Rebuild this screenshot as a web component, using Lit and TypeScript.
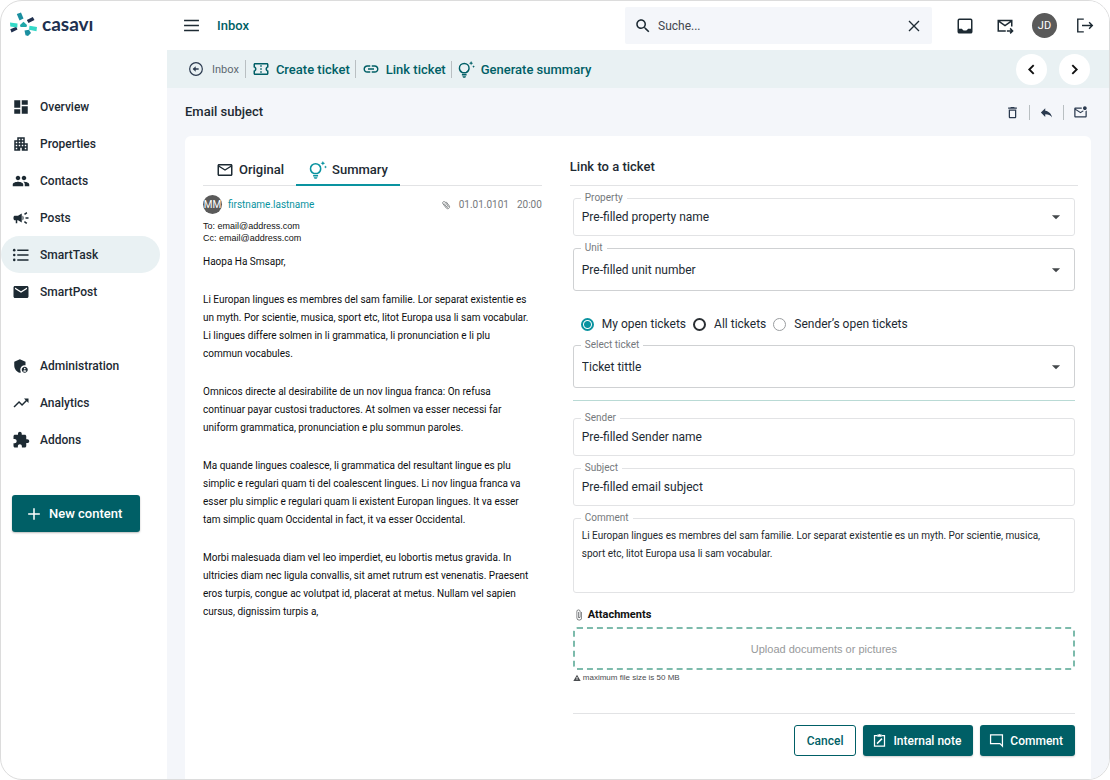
import { LitElement, html, css, svg, nothing } from "lit";
import type { SVGTemplateResult, TemplateResult } from "lit";
import { customElement, property, state } from "lit/decorators.js";
import { classMap } from "lit/directives/class-map.js";

const filled = (d: string) => svg`<path fill="currentColor" fill-rule="evenodd" d=${d}></path>`;
const stroked = (d: string, width = 2) =>
  svg`<path fill="none" stroke="currentColor" stroke-width=${width} d=${d}></path>`;

const ICONS: Record<string, SVGTemplateResult> = {
  menu: stroked("M1.500 5h21M1.500 12h21M1.500 19h21"),
  search: filled(
    "M15.5 14h-.79l-.28-.27C15.41 12.59 16 11.11 16 9.5 16 5.91 13.09 3 9.5 3S3 5.91 3 9.5 5.91 16 9.5 16c1.61 0 3.09-.59 4.23-1.57l.27.28v.79l5 4.99L20.49 19l-4.99-5zm-6 0C7.01 14 5 11.99 5 9.5S7.01 5 9.5 5 14 7.01 14 9.5 11.99 14 9.5 14z"
  ),
  close: stroked("M4.500 4.500l15 15M19.500 4.500l-15 15"),
  tray: svg`<rect x="3" y="3" width="18" height="18" rx="1.500" fill="none" stroke="currentColor" stroke-width="2"></rect>
    <path fill="currentColor" d="M3 15.500h5c.8 1.600 2.200 2.500 4 2.500s3.200-.9 4-2.500h5V21H3z"></path>`,
  forward: svg`${stroked("M13 18.500H3V4.500h18v8M3.500 5.500l8.500 6 8.500-6")}${stroked("M14.500 18.500h7M18.800 15.200l3.300 3.300-3.300 3.300")}`,
  logout: stroked("M11 3H2.500v18H11M8.500 12H23M18.500 7.500L23 12l-4.500 4.500"),
  dashboard: filled("M3 13h8V3H3v10zm0 8h8v-6H3v6zm10 0h8V11h-8v10zm0-18v6h8V3h-8z"),
  apartment: filled(
    "M17 11V3H7v4H3v14h8v-4h2v4h8V11h-4zM7 19H5v-2h2v2zm0-4H5v-2h2v2zm0-4H5V9h2v2zm4 4H9v-2h2v2zm0-4H9V9h2v2zm0-4H9V5h2v2zm4 8h-2v-2h2v2zm0-4h-2V9h2v2zm0-4h-2V5h2v2zm4 12h-2v-2h2v2zm0-4h-2v-2h2v2z"
  ),
  people: filled(
    "M16 11c1.66 0 2.99-1.34 2.99-3S17.66 5 16 5c-1.66 0-3 1.34-3 3s1.34 3 3 3zm-8 0c1.66 0 2.99-1.34 2.99-3S9.66 5 8 5C6.34 5 5 6.34 5 8s1.34 3 3 3zm0 2c-2.33 0-7 1.17-7 3.5V19h14v-2.5c0-2.33-4.67-3.5-7-3.5zm8 0c-.29 0-.62.02-.97.05 1.16.84 1.97 1.97 1.97 3.45V19h6v-2.5c0-2.33-4.67-3.5-7-3.5z"
  ),
  campaign: filled(
    "M18 11v2h4v-2h-4zm-2 6.61c.96.71 2.21 1.65 3.2 2.39.4-.53.8-1.07 1.2-1.6-.99-.74-2.24-1.68-3.2-2.4-.4.54-.8 1.08-1.2 1.61zM20.4 5.6c-.4-.53-.8-1.07-1.2-1.6-.99.74-2.24 1.68-3.2 2.4.4.53.8 1.07 1.2 1.6.96-.72 2.21-1.65 3.2-2.4zM4 9c-1.1 0-2 .9-2 2v2c0 1.1.9 2 2 2h1v4h2v-4h1l5 3V6L8 9H4zm11.5 3c0-1.33-.58-2.53-1.5-3.35v6.69c.92-.81 1.5-2.01 1.5-3.34z"
  ),
  list: svg`${stroked("M7 5.500h15M7 12h15M7 18.500h15")}
    <g fill="currentColor"><circle cx="3" cy="5.500" r="1.700"></circle><circle cx="3" cy="12" r="1.700"></circle><circle cx="3" cy="18.500" r="1.700"></circle></g>`,
  mail: filled(
    "M20 4H4c-1.1 0-1.99.9-1.99 2L2 18c0 1.1.9 2 2 2h16c1.1 0 2-.9 2-2V6c0-1.1-.9-2-2-2zm0 4l-8 5-8-5V6l8 5 8-5v2z"
  ),
  mailOutline: filled(
    "M22 6c0-1.1-.9-2-2-2H4c-1.1 0-2 .9-2 2v12c0 1.1.9 2 2 2h16c1.1 0 2-.9 2-2V6zm-2 0l-8 5-8-5h16zm0 12H4V8l8 5 8-5v10z"
  ),
  unread: filled(
    "M22 8.98V18c0 1.1-.9 2-2 2H4c-1.1 0-2-.9-2-2V6c0-1.1.9-2 2-2h10.1c-.06.32-.1.66-.1 1 0 .34.04.68.1 1H4l8 5 3.67-2.29c.47.43 1.02.76 1.63.98L12 13 4 8v10h16V9.9c.74-.15 1.42-.48 2-.92zM16 5c0 1.66 1.34 3 3 3s3-1.34 3-3-1.34-3-3-3-3 1.34-3 3z"
  ),
  admin: svg`${filled(
    "M17 11c.34 0 .67.04 1 .09V6.27L10.5 3 3 6.27v4.91c0 4.54 3.2 8.79 7.5 9.82.55-.13 1.08-.32 1.6-.55-.69-.98-1.1-2.17-1.1-3.45 0-3.31 2.69-6 6-6z"
  )}${filled(
    "M17 13c-2.21 0-4 1.79-4 4s1.79 4 4 4 4-1.79 4-4-1.79-4-4-4zm0 1.38c.62 0 1.12.51 1.12 1.12s-.51 1.12-1.12 1.12-1.12-.51-1.12-1.12.5-1.12 1.12-1.12zm0 5.37c-.93 0-1.74-.46-2.24-1.17.05-.72 1.51-1.08 2.24-1.08s2.19.36 2.24 1.08c-.5.71-1.31 1.17-2.24 1.17z"
  )}`,
  trend: filled("M16 6l2.29 2.29-4.88 4.88-4-4L2 16.59 3.41 18l6-6 4 4 6.3-6.29L22 12V6z"),
  puzzle: filled(
    "M20.5 11H19V7c0-1.1-.9-2-2-2h-4V3.5C13 2.12 11.88 1 10.5 1S8 2.12 8 3.5V5H4c-1.1 0-1.99.9-1.99 2v3.8H3.5c1.49 0 2.7 1.21 2.7 2.7s-1.21 2.7-2.7 2.7H2V20c0 1.1.9 2 2 2h3.8v-1.5c0-1.49 1.21-2.7 2.7-2.7 1.49 0 2.7 1.21 2.7 2.7V22H17c1.1 0 2-.9 2-2v-4h1.5c1.38 0 2.5-1.12 2.5-2.5S21.88 11 20.5 11z"
  ),
  plus: stroked("M12 2v20M2 12h20", 2.6),
  back: svg`<circle cx="12" cy="12" r="9.500" fill="none" stroke="currentColor" stroke-width="1.800"></circle>${stroked("M8.500 12H16")}${filled("M7 12l4.500-4v8z")}`,
  ticket: filled(
    "M22 10V6c0-1.110-.9-2-2-2H4c-1.100 0-1.990.890-1.990 2v4c1.100 0 1.990.9 1.990 2s-.89 2-2 2v4c0 1.100.9 2 2 2h16c1.100 0 2-.9 2-2v-4c-1.100 0-2-.9-2-2s.9-2 2-2zm-2-1.460c-1.190.690-2 1.990-2 3.460s.810 2.770 2 3.460V18H4v-2.540c1.190-.690 2-1.990 2-3.460 0-1.480-.8-2.770-1.990-3.460L4 6h16v2.540zM11 15h2v2h-2zm0-4h2v2h-2zm0-4h2v2h-2z"
  ),
  link: filled(
    "M3.9 12c0-1.71 1.39-3.1 3.1-3.1h4V7H7c-2.76 0-5 2.24-5 5s2.24 5 5 5h4v-1.9H7c-1.71 0-3.1-1.39-3.1-3.1zM8 13h8v-2H8v2zm9-6h-4v1.9h4c1.71 0 3.1 1.39 3.1 3.1s-1.39 3.1-3.1 3.1h-4V17h4c2.76 0 5-2.24 5-5s-2.24-5-5-5z"
  ),
  bulb: svg`${stroked("M6.200 16.500C3.600 15.200 2 12.900 2 10.200 2 6.500 5 3.500 8.800 3.500s6.800 3 6.800 6.700c0 2.700-1.600 5-4.200 6.300z")}
    ${stroked("M5.500 19.500h6.600")}${filled("M6.300 21.500h5c-.2 1.300-1.200 2.200-2.500 2.200s-2.300-.9-2.500-2.200z")}
    ${filled("M18.500 0l.9 2.100 2.100.9-2.100.9-.9 2.100-.9-2.100-2.100-.9 2.100-.9zM22 6l.6 1.400 1.400.6-1.400.6L22 10l-.6-1.400L20 8l1.400-.6z")}`,
  left: stroked("M15.500 5l-7 7 7 7", 3),
  right: stroked("M8.500 5l7 7-7 7", 3),
  trash: filled("M6 19c0 1.1.9 2 2 2h8c1.1 0 2-.9 2-2V7H6v12zM8 9h8v10H8V9zm7.5-5l-1-1h-5l-1 1H5v2h14V4z"),
  reply: filled("M10 9V5l-7 7 7 7v-4.1c5 0 8.5 1.6 11 5.1-1-5-4-10-11-11z"),
  clip: filled(
    "M16.5 6v11.5c0 2.21-1.79 4-4 4s-4-1.79-4-4V5c0-1.38 1.12-2.5 2.5-2.5s2.5 1.12 2.5 2.5v10.5c0 .55-.45 1-1 1s-1-.45-1-1V6H10v9.5c0 1.38 1.12 2.5 2.5 2.5s2.5-1.12 2.5-2.5V5c0-2.21-1.79-4-4-4S7 2.79 7 5v12.5c0 3.04 2.46 5.5 5.5 5.5s5.5-2.46 5.5-5.5V6h-1.5z"
  ),
  clipTilted: svg`<g transform="rotate(-38 12 12)">${stroked("M17 6v12c0 2.500-2 4.500-4.500 4.500S8 20.500 8 18V5c0-1.800 1.400-3.200 3.200-3.200S14.500 3.200 14.500 5v12c0 1-.8 2-2 2s-2-1-2-2V6", 1.9)}</g>`,
  warning: filled("M1 21h22L12 2 1 21zm12.500-3h-3v-2h3v2zm0-4h-3v-5h3v5z"),
  caret: filled("M5 9l7 7 7-7z"),
  note: svg`${stroked("M8.500 4H4v17h16V4h-4.500")}${filled("M8.500 2.500h2a1.600 1.600 0 0 1 3 0h2V6h-7z")}${stroked("M8 17l8-8", 2.4)}`,
  bubble: stroked("M21.500 21l-4-4H2.500V3h19z"),
};

@customElement("ui-icon")
export class UiIcon extends LitElement {
  @property() name = "";
  @property({ type: Number }) size = 18;

  static styles = css`
    :host {
      display: inline-flex;
      flex: none;
    }
    svg {
      display: block;
      overflow: visible;
    }
  `;

  render() {
    return html`<svg width=${this.size} height=${this.size} viewBox="0 0 24 24" aria-hidden="true">
      ${ICONS[this.name] ?? nothing}
    </svg>`;
  }
}

const NAV = [
  [
    ["Overview", "dashboard"],
    ["Properties", "apartment"],
    ["Contacts", "people"],
    ["Posts", "campaign"],
    ["SmartTask", "list"],
    ["SmartPost", "mail"],
  ],
  [
    ["Administration", "admin"],
    ["Analytics", "trend"],
    ["Addons", "puzzle"],
  ],
];

// Plain-text mail: the line breaks belong to the message.
const MESSAGE = [
  ["Haopa Ha Smsapr,"],
  [
    "Li Europan lingues es membres del sam familie. Lor separat existentie es",
    "un myth. Por scientie, musica, sport etc, litot Europa usa li sam vocabular.",
    "Li lingues differe solmen in li grammatica, li pronunciation e li plu",
    "commun vocabules.",
  ],
  [
    "Omnicos directe al desirabilite de un nov lingua franca: On refusa",
    "continuar payar custosi traductores. At solmen va esser necessi far",
    "uniform grammatica, pronunciation e plu sommun paroles.",
  ],
  [
    "Ma quande lingues coalesce, li grammatica del resultant lingue es plu",
    "simplic e regulari quam ti del coalescent lingues. Li nov lingua franca va",
    "esser plu simplic e regulari quam li existent Europan lingues. It va esser",
    "tam simplic quam Occidental in fact, it va esser Occidental.",
  ],
  [
    "Morbi malesuada diam vel leo imperdiet, eu lobortis metus gravida. In",
    "ultricies diam nec ligula convallis, sit amet rutrum est venenatis. Praesent",
    "eros turpis, congue ac volutpat id, placerat at metus. Nullam vel sapien",
    "cursus, dignissim turpis a,",
  ],
];

@customElement("app-root")
export class AppRoot extends LitElement {
  @state() private section = "SmartTask";
  @state() private scope = "My open tickets";

  static styles = css`
    :host {
      display: block;
      font-family: Roboto, "Liberation Sans", sans-serif;
      font-size: 12px;
      line-height: 18px;
      color: #1d2a33;
      --teal: #005f66;
      --accent: #0a93a0;
      --mist: #e9f1f3;
      --line: #e2e3e5;
    }
    * {
      box-sizing: border-box;
    }
    button,
    input,
    select,
    textarea {
      font: inherit;
      color: inherit;
      margin: 0;
    }
    button {
      border: 0;
      padding: 0;
      background: none;
      cursor: pointer;
    }
    a {
      color: inherit;
      text-decoration: none;
    }
    h1,
    h2,
    p {
      margin: 0;
    }
    .frame {
      display: grid;
      grid-template-columns: 166px minmax(0, 1fr);
      min-height: 100vh;
      border: 1px solid #dcdcdc;
      border-radius: 22px;
      overflow: hidden;
      background: #fff;
    }
    .sidebar {
      display: flex;
      flex-direction: column;
    }
    .brand {
      display: flex;
      align-items: center;
      gap: 5px;
      height: 46px;
      padding-left: 8px;
    }
    .wordmark {
      font-family: Lato, sans-serif;
      font-size: 19px;
      font-weight: 700;
      color: #20304f;
    }
    .menu {
      padding-top: 4px;
    }
    .group {
      display: flex;
      flex-direction: column;
      margin-top: 37px;
    }
    .item {
      display: flex;
      align-items: center;
      gap: 10px;
      height: 37px;
      margin-right: 7px;
      padding-left: 11px;
      border-radius: 19px;
      font-weight: 500;
    }
    .item.current {
      background: var(--mist);
    }
    .new {
      display: flex;
      align-items: center;
      gap: 8px;
      width: 128px;
      height: 37px;
      margin: 37px 0 0 11px;
      padding-left: 15px;
      border-radius: 3px;
      background: var(--teal);
      color: #fff;
      font-size: 13px;
      font-weight: 500;
      box-shadow: 0 1px 2px #0004;
    }
    .main {
      display: flex;
      flex-direction: column;
      background: #f4f6fa;
    }
    .icon {
      display: grid;
      place-items: center;
    }
    .topbar {
      display: flex;
      align-items: center;
      height: 49px;
      padding: 0 12px 0 16px;
      background: #fff;
    }
    .title {
      margin-left: 17px;
      font-size: 13px;
      font-weight: 500;
      color: var(--teal);
    }
    .search {
      display: flex;
      align-items: center;
      gap: 6px;
      width: 307px;
      height: 37px;
      margin-left: auto;
      padding: 0 10px 0 9px;
      border-radius: 2px;
      background: #f4f6fa;
    }
    .search input {
      flex: 1;
      min-width: 0;
      padding: 0;
      border: 0;
      background: none;
      outline: none;
    }
    .search input::placeholder {
      color: #43474e;
      opacity: 1;
    }
    .account {
      display: grid;
      grid-template-columns: repeat(4, 25px);
      align-items: center;
      gap: 15px;
      margin-left: 20px;
    }
    .avatar {
      display: grid;
      place-items: center;
      width: 25px;
      height: 25px;
      border-radius: 50%;
      background: #5a5a5a;
      color: #fff;
      font-size: 11px;
    }
    .avatar.small {
      width: 19px;
      height: 19px;
      font-size: 10px;
    }
    .actions {
      display: flex;
      align-items: center;
      height: 38px;
      padding: 0 19px 0 21px;
      background: var(--mist);
    }
    .action {
      display: flex;
      align-items: center;
      gap: 6px;
      padding: 0 5px 0 6px;
      border-left: 1px solid #b9bfc2;
      font-size: 13px;
      font-weight: 500;
      line-height: 15px;
      color: var(--teal);
    }
    .action.first {
      gap: 8px;
      padding: 0 6px 0 0;
      border: 0;
      font-size: 11px;
      font-weight: 400;
      color: #5d6870;
    }
    .action.first ui-icon {
      color: #2b3a4f;
    }
    .pager {
      display: flex;
      gap: 12px;
      margin-left: auto;
    }
    .pager button {
      width: 31px;
      height: 31px;
      border-radius: 50%;
      background: #fff;
      color: #111;
    }
    .subject {
      display: flex;
      align-items: center;
      justify-content: space-between;
      height: 48px;
      padding: 0 21px 0 18px;
    }
    .subject h1 {
      font-size: 13px;
      font-weight: 500;
    }
    .tools {
      display: flex;
      color: #2b3a4f;
    }
    .tools button {
      padding: 0 9px;
      border-left: 1px solid #b9bfc2;
    }
    .tools button:first-child {
      border: 0;
    }
    .tools button:last-child {
      padding-right: 0;
    }
    .card {
      display: grid;
      grid-template-columns: minmax(0, 2fr) minmax(0, 3fr);
      gap: 28px;
      flex: 1;
      margin: 0 18px;
      padding: 0 13px 0 18px;
      border-radius: 6px 6px 0 0;
      background: #fff;
    }
    .tabs {
      display: flex;
      height: 50px;
      border-bottom: 1px solid var(--line);
      align-items: flex-end;
    }
    .tab {
      display: flex;
      align-items: center;
      gap: 5px;
      height: 31px;
      padding: 0 12px 0 13px;
      border-bottom: 2px solid transparent;
      margin-bottom: -1px;
      font-size: 13px;
      font-weight: 500;
    }
    .tab.current {
      border-color: var(--accent);
    }
    .tab.current ui-icon {
      color: var(--accent);
    }
    .from {
      display: flex;
      align-items: center;
      gap: 6px;
      padding-top: 9px;
      font-size: 10px;
    }
    .from a {
      color: var(--accent);
    }
    .when {
      display: flex;
      align-items: center;
      gap: 8px;
      margin-left: auto;
      color: #75797c;
    }
    .route {
      padding-top: 6px;
      font-family: "Liberation Sans", sans-serif;
      font-size: 9px;
      line-height: 12px;
      color: #111;
    }
    .body {
      display: flex;
      flex-direction: column;
      gap: 20px;
      padding-top: 9px;
      font-size: 10px;
      white-space: pre;
      color: #0c0e10;
    }
    .form h2 {
      height: 50px;
      padding-top: 22px;
      border-bottom: 1px solid var(--line);
      font-size: 13px;
      font-weight: 500;
    }
    .fields {
      display: flex;
      flex-direction: column;
      gap: 12px;
      padding: 12px 3px 0;
    }
    .field {
      position: relative;
      display: flex;
    }
    .field label {
      position: absolute;
      top: -6px;
      left: 8px;
      padding: 0 4px;
      background: #fff;
      font-size: 10px;
      line-height: 12px;
      color: #75797c;
    }
    .field select,
    .field input,
    .field textarea {
      width: 100%;
      height: 38px;
      padding: 0 8px;
      border: 1px solid var(--line);
      border-radius: 3px;
      background: #fff;
      outline: none;
      appearance: none;
      resize: none;
    }
    .field.tall select {
      height: 43px;
      border-color: #cfd1d3;
    }
    .field textarea {
      display: block;
      height: 75px;
      padding: 8px 16px 8px 8px;
      font-size: 10px;
      color: #23292d;
    }
    .field ui-icon {
      position: absolute;
      right: 12px;
      top: 50%;
      margin-top: -7px;
      color: #43474a;
      pointer-events: none;
    }
    .scopes {
      display: flex;
      gap: 7px;
      padding: 12px 8px 0;
    }
    .scopes label {
      display: flex;
      align-items: center;
      gap: 8px;
    }
    .scopes input {
      appearance: none;
      width: 13px;
      height: 13px;
      border: 1px solid #9a9da0;
      border-radius: 50%;
    }
    .scopes .strong {
      border: 2px solid #2a2f33;
    }
    .scopes input:checked {
      border: 2px solid var(--accent);
      background: radial-gradient(circle, var(--accent) 3px, #fff 4px);
    }
    .rule {
      width: 100%;
      margin: 0 0 5px;
      border: 0;
      border-top: 1px solid #b9dad5;
    }
    .files {
      display: flex;
      flex-direction: column;
    }
    .caption {
      display: flex;
      align-items: center;
      gap: 3px;
      height: 20px;
      font-size: 11px;
      font-weight: 700;
      color: #111;
    }
    .caption ui-icon {
      color: #66696c;
    }
    .drop {
      display: grid;
      place-items: center;
      width: 100%;
      height: 43px;
      margin-top: 2px;
      border: 2px dashed #7dbbac;
      border-radius: 4px;
      font-family: "Liberation Sans", sans-serif;
      font-size: 11px;
      color: #97999b;
    }
    .hint {
      display: flex;
      align-items: center;
      gap: 2px;
      padding-top: 3px;
      font-family: "Liberation Sans", sans-serif;
      font-size: 8px;
      line-height: 10px;
      color: #4a4d50;
    }
    .footer {
      display: flex;
      justify-content: flex-end;
      gap: 7px;
      margin-top: 18px;
      padding: 11px 0 23px;
      border-top: 1px solid var(--line);
    }
    .btn {
      display: flex;
      align-items: center;
      gap: 6px;
      height: 31px;
      padding: 0 12px 0 9px;
      border-radius: 3px;
      background: var(--teal);
      color: #fff;
      font-weight: 500;
      box-shadow: 0 1px 2px #0003;
    }
    .btn.outline {
      padding: 0 12px;
      border: 1px solid var(--teal);
      background: #fff;
      color: var(--teal);
      box-shadow: none;
    }
  `;

  private logo(): TemplateResult {
    return html`<svg width="28" height="24" viewBox="0 0 28 24" aria-hidden="true">
      <path fill="#1b8fa0" d="M7.800 2l4.200-1.500 2.500 6-4 1.900z"></path>
      <path fill="#20304f" d="M17.800 8l6-3 1.700 3-6 3zM1.300 17.300l6-2.500 1.200 2.700-6 3z"></path>
      <path fill="#35d9c8" d="M1 10.500l7.500 1-.2 4-7-1zM20.500 13.800l7.500 1.200-.5 4.200-7.500-1.500z"></path>
      <path fill="#1fa7a8" d="M11 13l3.500-3.300L18 13l-.5 2h-6z"></path>
      <path fill="#1b8fa0" d="M15.500 18.500l4.500-.8 2 3.300-3 3-2.500-.7z"></path>
    </svg>`;
  }

  private select(id: string, label: string, value: string, tall = false): TemplateResult {
    return html`<div class=${classMap({ field: true, tall })}>
      <select id=${id}>
        <option>${value}</option>
      </select>
      <label for=${id}>${label}</label>
      <ui-icon name="caret" size="14"></ui-icon>
    </div>`;
  }

  private text(id: string, label: string, value: string): TemplateResult {
    return html`<div class="field">
      <input id=${id} type="text" .value=${value} />
      <label for=${id}>${label}</label>
    </div>`;
  }

  private radio(label: string, strong = false): TemplateResult {
    return html`<label>
      <input
        type="radio"
        name="scope"
        class=${classMap({ strong })}
        .checked=${this.scope === label}
        @change=${() => (this.scope = label)}
      />${label}
    </label>`;
  }

  render() {
    return html`<div class="frame">
      <aside class="sidebar">
        <a class="brand" href="#" aria-label="casavi">${this.logo()}<span class="wordmark">casavı</span></a>
        <nav class="menu">
          ${NAV.map(
            (group) => html`<div class="group">
              ${group.map(
                ([label, icon]) => html`<a
                  href="#"
                  class=${classMap({ item: true, current: this.section === label })}
                  @click=${() => (this.section = label)}
                  ><ui-icon name=${icon} size="18"></ui-icon>${label}</a
                >`
              )}
            </div>`
          )}
        </nav>
        <button class="new"><ui-icon name="plus" size="14"></ui-icon>New content</button>
      </aside>
      <div class="main">
        <header class="topbar">
          <button class="icon" aria-label="Menu"><ui-icon name="menu" size="17"></ui-icon></button>
          <span class="title">Inbox</span>
          <div class="search">
            <ui-icon name="search" size="18"></ui-icon>
            <input type="text" aria-label="Suche" placeholder="Suche..." />
            <button class="icon" aria-label="Clear"><ui-icon name="close" size="16"></ui-icon></button>
          </div>
          <div class="account">
            <button class="icon" aria-label="Tray"><ui-icon name="tray" size="18"></ui-icon></button>
            <button class="icon" aria-label="Forward"><ui-icon name="forward" size="18"></ui-icon></button>
            <span class="avatar">JD</span>
            <button class="icon" aria-label="Log out"><ui-icon name="logout" size="17"></ui-icon></button>
          </div>
        </header>
        <div class="actions">
          <button class="action first"><ui-icon name="back" size="16"></ui-icon>Inbox</button>
          <button class="action"><ui-icon name="ticket" size="18"></ui-icon>Create ticket</button>
          <button class="action"><ui-icon name="link" size="18"></ui-icon>Link ticket</button>
          <button class="action"><ui-icon name="bulb" size="17"></ui-icon>Generate summary</button>
          <div class="pager">
            <button class="icon" aria-label="Previous"><ui-icon name="left" size="15"></ui-icon></button>
            <button class="icon" aria-label="Next"><ui-icon name="right" size="15"></ui-icon></button>
          </div>
        </div>
        <div class="subject">
          <h1>Email subject</h1>
          <div class="tools">
            <button class="icon" aria-label="Delete"><ui-icon name="trash" size="15"></ui-icon></button>
            <button class="icon" aria-label="Reply"><ui-icon name="reply" size="15"></ui-icon></button>
            <button class="icon" aria-label="Mark unread"><ui-icon name="unread" size="15"></ui-icon></button>
          </div>
        </div>
        <div class="card">
          <section>
            <div class="tabs" role="tablist">
              <button class="tab" role="tab"><ui-icon name="mailOutline" size="18"></ui-icon>Original</button>
              <button class="tab current" role="tab" aria-selected="true">
                <ui-icon name="bulb" size="18"></ui-icon>Summary
              </button>
            </div>
            <div class="from">
              <span class="avatar small">MM</span>
              <a href="#">firstname.lastname</a>
              <span class="when"
                ><ui-icon name="clipTilted" size="10"></ui-icon><span>01.01.0101</span><span>20:00</span></span
              >
            </div>
            <div class="route">
              <p>To: email@address.com</p>
              <p>Cc: email@address.com</p>
            </div>
            <div class="body">${MESSAGE.map((lines) => html`<p>${lines.join("\n")}</p>`)}</div>
          </section>
          <section class="form">
            <h2>Link to a ticket</h2>
            <div class="fields">
              ${this.select("property", "Property", "Pre-filled property name")}
              ${this.select("unit", "Unit", "Pre-filled unit number", true)}
              <div class="scopes" role="radiogroup" aria-label="Tickets">
                ${this.radio("My open tickets")}${this.radio("All tickets", true)}${this.radio("Sender’s open tickets")}
              </div>
              ${this.select("ticket", "Select ticket", "Ticket tittle", true)}
              <hr class="rule" />
              ${this.text("sender", "Sender", "Pre-filled Sender name")}
              ${this.text("subject", "Subject", "Pre-filled email subject")}
              <div class="field">
                <textarea
                  id="comment"
                  .value=${"Li Europan lingues es membres del sam familie. Lor separat existentie es un myth. Por scientie, musica, sport etc, litot Europa usa li sam vocabular."}
                ></textarea>
                <label for="comment">Comment</label>
              </div>
              <div class="files">
                <div class="caption"><ui-icon name="clip" size="12"></ui-icon>Attachments</div>
                <button class="drop">Upload documents or pictures</button>
                <p class="hint"><ui-icon name="warning" size="8"></ui-icon>maximum file size is 50 MB</p>
              </div>
              <div class="footer">
                <button class="btn outline">Cancel</button>
                <button class="btn"><ui-icon name="note" size="15"></ui-icon>Internal note</button>
                <button class="btn"><ui-icon name="bubble" size="15"></ui-icon>Comment</button>
              </div>
            </div>
          </section>
        </div>
      </div>
    </div>`;
  }
}
